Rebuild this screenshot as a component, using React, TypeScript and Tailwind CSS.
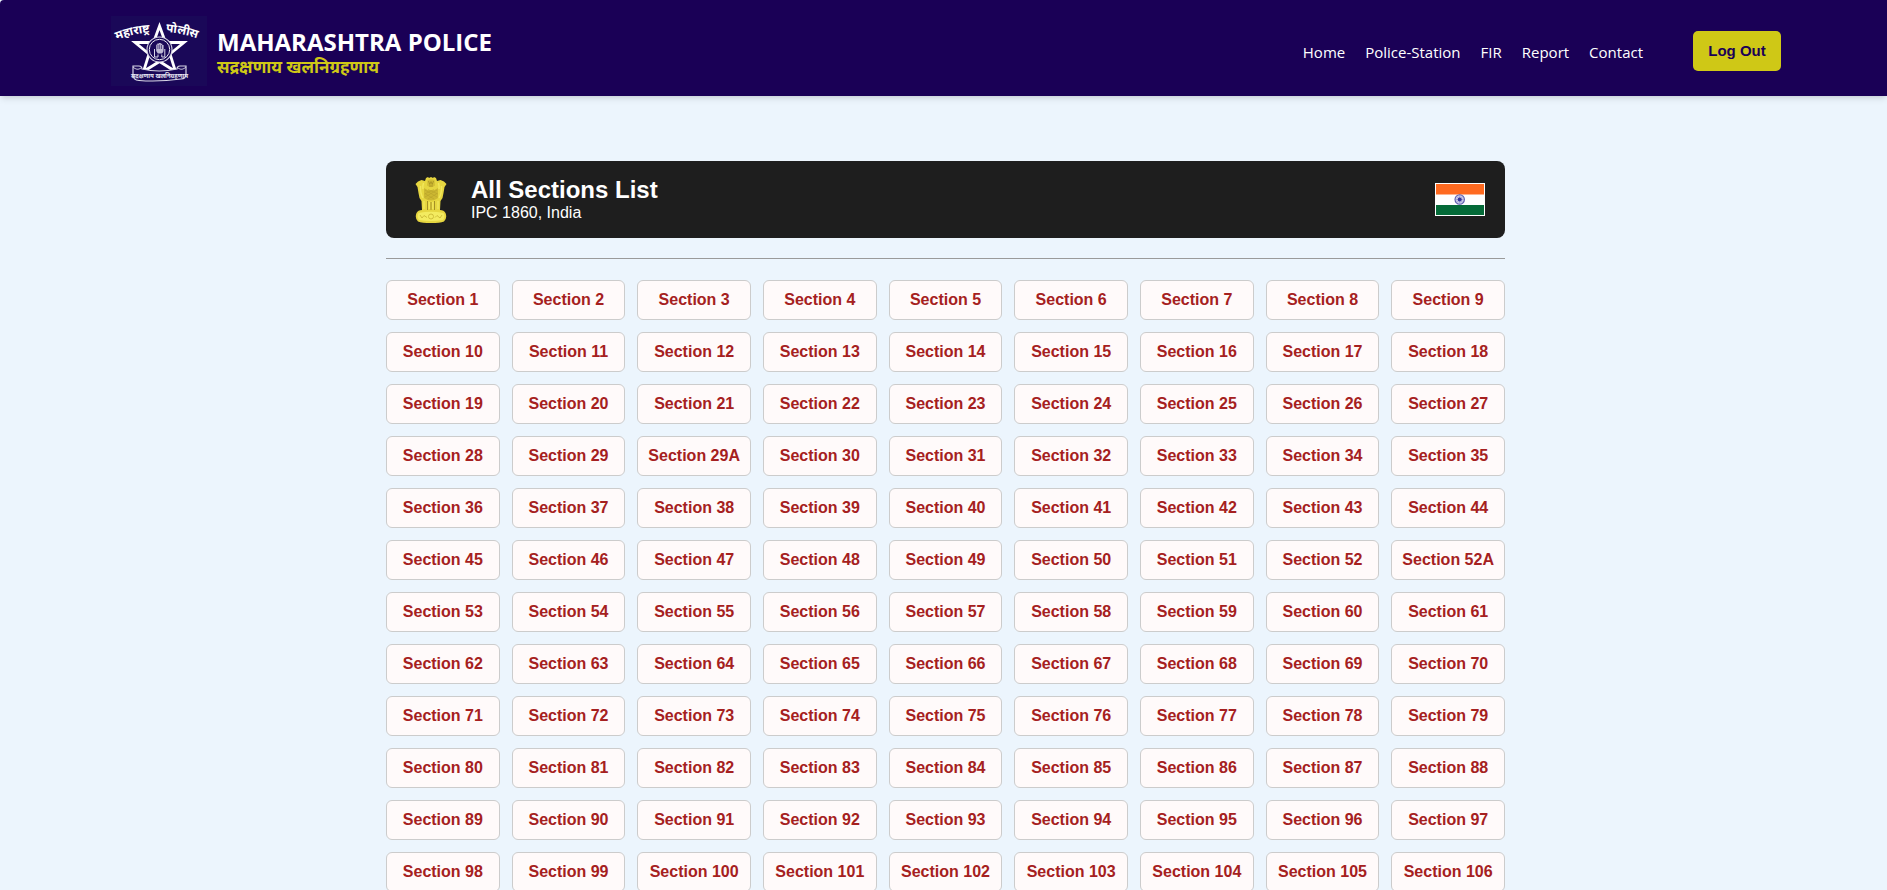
const navLinks = ["Home", "Police-Station", "FIR", "Report", "Contact"];

const sections: string[] = [];
for (let n = 1; n <= 106; n++) {
  sections.push(String(n));
  if (n === 29 || n === 52) sections.push(`${n}A`);
}

function PoliceLogo() {
  return (
    <svg viewBox="0 0 96 70" className="h-[70px] w-24 shrink-0 bg-[#1a0858]" role="img" aria-label="Maharashtra Police emblem">
      <defs>
        <path id="arc-left" d="M6 24 Q22 17 46 16" />
        <path id="arc-right" d="M55 16 Q72 17 93 25" />
      </defs>
      <g fill="#fff" fontFamily="'Noto Sans Devanagari','Noto Sans',sans-serif" fontWeight="700">
        <text fontSize="12"><textPath href="#arc-left">महाराष्ट्र</textPath></text>
        <text fontSize="12"><textPath href="#arc-right">पोलीस</textPath></text>
      </g>
      <path
        d="M48.500 10 L54.500 26.500 L73 26.500 L59 38 L64.500 55.500 L48.500 45.500 L32.500 55.500 L38 38 L24 26.500 L42.500 26.500 Z"
        fill="#1a0858" stroke="#fff" strokeWidth="2.800" strokeLinejoin="miter"
      />
      <circle cx="48.500" cy="33.500" r="12.500" fill="#1a0858" stroke="#d8d6e6" strokeWidth="1.100" />
      <circle cx="48.500" cy="33.500" r="10.200" fill="none" stroke="#e8e6f2" strokeWidth="1" />
      <path d="M45.200 29.500 Q45.200 28 46.400 28.500 V27.500 H48 V27 H49.800 V27.700 H51.300 V29 H52.600 V34 Q52.600 36.500 51 37.500 H46.800 L45.200 35 Z" fill="#bdb8d4" />
      <path d="M46.900 29 V33 M48.700 28.500 V33 M50.500 29 V33" stroke="#1a0858" strokeWidth="0.600" />
      <path d="M43.500 33 V41 H47 V38.500 M53.800 33 V41 H50.800 V38.500" fill="none" stroke="#d8d6e6" strokeWidth="1" />
      <path
        d="M22 50 H28 Q31 50 31 53 Q48 57 66 53 Q66 50 69 50 H75 V58 Q75 63 70 63 Q48 66 28 64.500 Q22 64 22 59 Z"
        fill="#1a0858" stroke="#d8d6e6" strokeWidth="1.200"
      />
      <path d="M22 51 Q26 55 30 52 M75 51 Q71 55 67 52" fill="none" stroke="#d8d6e6" strokeWidth="0.900" />
      <text x="48.500" y="62" textAnchor="middle" fill="#e8e6f2" fontSize="6" fontWeight="700" fontFamily="'Noto Sans Devanagari','Noto Sans',sans-serif">
        सद्रक्षणाय खलनिग्रहणाय
      </text>
    </svg>
  );
}

function Emblem() {
  return (
    <svg viewBox="0 0 32 48" className="h-12 w-8 shrink-0" role="img" aria-label="State Emblem of India">
      <path
        d="M11 2 L13 1 L14 2 L16 1 L18 2 L19 1 L21 2 L22 5 L25.500 4 L29 5.500 L31.500 8 L29.500 11 L28.500 17 L27.500 22 L25.500 25 L25 34 Q29 34 30.500 37 Q32.500 42 29 45.500 Q25 47 16 47 Q7 47 3 45.500 Q-0.500 42 1.500 37 Q3 34 7 34 L6.500 25 L4.500 22 L3.500 17 L2.500 11 L0.500 8 L3 5.500 L6.500 4 L10 5 Z"
        fill="#e6d640"
      />
      <path d="M9 12 Q16 17 23 12 L23 22 Q16 27 9 22 Z" fill="#cdb832" />
      <path d="M12.500 4 Q16 2.500 19.500 4 L20 9.500 Q16 13 12 9.500 Z" fill="#d2be34" />
      <path d="M13.500 5 L14.800 8.500 L16 5.500 L17.200 8.500 L18.500 5 M14 10 H18" fill="none" stroke="#9d8820" strokeWidth="0.700" />
      <path d="M10 14 L22 21 M10 17.500 L19 23 M13 13.500 L23 18 M22 14 L10 21 M22 17.500 L13 23 M19 13.500 L9.500 18" stroke="#b59e29" strokeWidth="0.500" />
      <path d="M5.500 10 Q5 17 8 22 M26.500 10 Q27 17 24 22 M8.500 7 Q7.500 10 8 13 M23.500 7 Q24.500 10 24 13" stroke="#f2e75c" strokeWidth="1.400" fill="none" />
      <path d="M12.500 25 V34 M16 26 V34 M19.500 25 V34" stroke="#9c8822" strokeWidth="0.900" />
      <path d="M9 25 V33 M14.300 26 V33 M17.800 26 V33 M23 25 V33" stroke="#f2e75c" strokeWidth="1.300" />
      <path d="M3.500 37 Q16 34.500 28.500 37 Q30.500 41 28 44 Q16 46 4 44 Q1.500 41 3.500 37 Z" fill="#f3eb60" />
      <circle cx="16" cy="40.500" r="2.500" fill="none" stroke="#cbb936" strokeWidth="0.900" />
      <path d="M5 39 L7 42 L9 39.500 L12 41.500 M20 41.500 L22 39.500 L25 42 L27 39" fill="none" stroke="#cbb936" strokeWidth="0.900" />
    </svg>
  );
}

function Flag() {
  return (
    <svg viewBox="0 0 50 33" className="h-[33px] w-[50px] shrink-0" role="img" aria-label="Flag of India">
      <rect width="50" height="33" fill="#fff" />
      <rect x="1" y="1" width="48" height="10.500" fill="#ff6a20" />
      <rect x="1" y="22" width="48" height="10" fill="#046a38" />
      <circle cx="24.700" cy="16.500" r="4.700" fill="#c9c9e8" stroke="#5a5aac" strokeWidth="1.100" />
      <path d="M24.700 12.500 V20.500 M20.700 16.500 H28.700 M21.900 13.700 L27.500 19.300 M27.500 13.700 L21.900 19.300" stroke="#8f8fce" strokeWidth="0.600" />
      <circle cx="24.700" cy="16.500" r="2" fill="#33339a" />
    </svg>
  );
}

export default function App() {
  return (
    <div className="min-h-screen bg-[#ecf5fd] font-['Liberation_Sans',Arial,sans-serif]">
      <header className="flex h-24 items-center justify-between rounded-tl bg-[#1a0056] pr-[106px] pl-[111px] shadow-md">
        <div className="flex items-center gap-2.5 pt-1.5">
          <PoliceLogo />
          <div className="pt-1 font-['Open_Sans','Noto_Sans',sans-serif]">
            <h1 className="text-2xl leading-7 font-bold text-white">MAHARASHTRA POLICE</h1>
            <p className="text-[17px] leading-[22px] font-bold text-[#cfc816]">सद्रक्षणाय खलनिग्रहणाय</p>
          </div>
        </div>
        <div className="flex items-center gap-[50px] pt-1.5">
          <nav className="flex gap-5 pt-0.5 font-['Open_Sans','Noto_Sans',sans-serif] text-[15px] font-medium text-white">
            {navLinks.map((label) => (
              <a key={label} href="#">{label}</a>
            ))}
          </nav>
          <button type="button" className="h-10 w-[88px] rounded-[5px] bg-[#cfc816] text-[15px] font-bold text-[#1a0056]">
            Log Out
          </button>
        </div>
      </header>

      <main className="pt-[65px] pl-1">
        <div className="mx-auto max-w-[1119px]">
          <div className="flex h-[77px] items-center justify-between rounded-lg bg-[#1e1e1e] pr-5 pl-[29px] text-white">
            <div className="flex items-center gap-6">
              <Emblem />
              <div className="pb-0.5">
                <h2 className="text-2xl leading-7 font-bold">All Sections List</h2>
                <p className="text-base leading-[18px]">IPC 1860, India</p>
              </div>
            </div>
            <Flag />
          </div>
          <hr className="mt-5 mb-[21px] border-t border-[#9a9a9a]" />
          <ul className="grid grid-cols-9 gap-3">
            {sections.map((name) => (
              <li key={name}>
                <a
                  href={`#section-${name}`}
                  className="flex h-10 items-center justify-center rounded-md border border-[#cccccc] bg-[#fffafa] text-base font-bold whitespace-nowrap text-[#a52020]"
                >
                  Section {name}
                </a>
              </li>
            ))}
          </ul>
        </div>
      </main>
    </div>
  );
}
